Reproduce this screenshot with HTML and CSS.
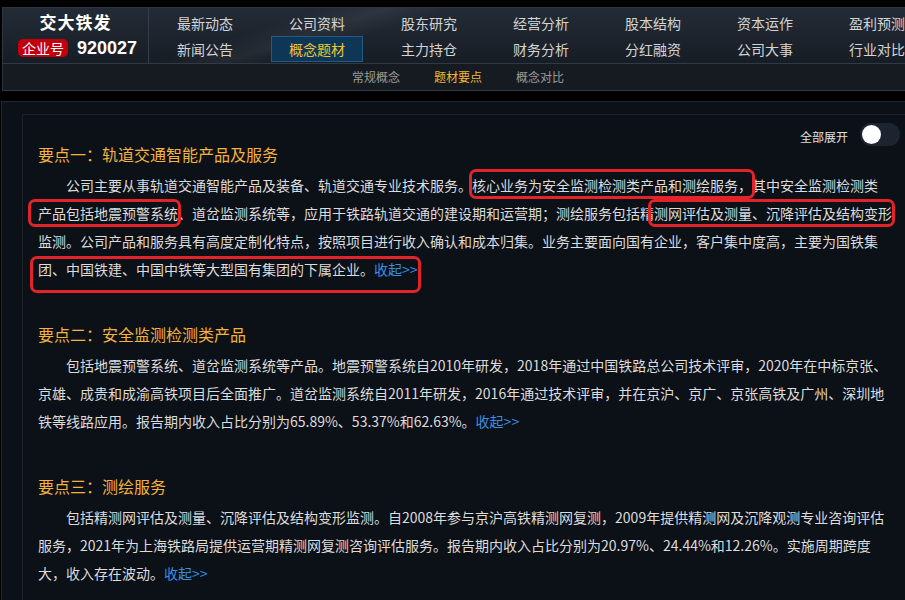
FILE: index.html
```html
<!DOCTYPE html>
<html>
<head>
  <title>交大铁发 - 题材要点</title>
  <link rel="stylesheet" href="styles.css">
</head>
<body>
  <div class="header">
    <div class="brand">
      <div class="brand-name">交大铁发</div>
      <div class="brand-code"><span class="badge">企业号</span><span class="code">920027</span></div>
    </div>
    <ul class="nav">
      <li>最新动态</li>
      <li>公司资料</li>
      <li>股东研究</li>
      <li>经营分析</li>
      <li>股本结构</li>
      <li>资本运作</li>
      <li>盈利预测</li>
      <li>新闻公告</li>
      <li class="active">概念题材</li>
      <li>主力持仓</li>
      <li>财务分析</li>
      <li>分红融资</li>
      <li>公司大事</li>
      <li>行业对比</li>
    </ul>
  </div>

  <div class="subnav">
    <a>常规概念</a>
    <a class="active">题材要点</a>
    <a>概念对比</a>
  </div>

  <div class="panel">
    <div class="box">
      <div class="toolbar">
        <span class="toolbar-label">全部展开</span>
        <span class="switch"></span>
      </div>

      <div class="point">
        <h3>要点一：轨道交通智能产品及服务</h3>
        <p>公司主要从事轨道交通智能产品及装备、轨道交通专业技术服务。<span class="mark m1">核心业务为安全监测检测类产品和测绘服务，</span>其中安全监测检测类<br><span class="mark m2">产品包括地震预警系统</span>、道岔监测系统等，应用于铁路轨道交通的建设期和运营期；测绘服务包括精<span class="mark m3">测网评估及测量、沉降评估及结构变形</span>监测。公司产品和服务具有高度定制化特点，按照项目进行收入确认和成本归集。业务主要面向国有企业，客户集中度高，主要为国铁集<span class="mark m4">团、中国铁建、中国中铁等大型国有集团的下属企业。<a class="fold">收起&gt;&gt;</a></span></p>
      </div>

      <div class="point">
        <h3>要点二：安全监测检测类产品</h3>
        <p>包括地震预警系统、道岔监测系统等产品。地震预警系统自2010年研发，2018年通过中国铁路总公司技术评审，2020年在中标京张、京雄、成贵和成渝高铁项目后全面推广。道岔监测系统自2011年研发，2016年通过技术评审，并在京沪、京广、京张高铁及广州、深圳地铁等线路应用。报告期内收入占比分别为65.89%、53.37%和62.63%。<a class="fold">收起&gt;&gt;</a></p>
      </div>

      <div class="point">
        <h3>要点三：测绘服务</h3>
        <p>包括精测网评估及测量、沉降评估及结构变形监测。自2008年参与京沪高铁精测网复测，2009年提供精测网及沉降观测专业咨询评估服务，2021年为上海铁路局提供运营期精测网复测咨询评估服务。报告期内收入占比分别为20.97%、24.44%和12.26%。实施周期跨度大，收入存在波动。<a class="fold">收起&gt;&gt;</a></p>
      </div>
    </div>
  </div>
</body>
</html>
```

FILE: styles.css
```css
html, body {
  overflow: hidden;
}

body {
  margin: 0;
  background: #000;
  font-family: "Noto Sans CJK SC", "Liberation Sans", sans-serif;
  color: #dcdcdc;
}

/* top header */
.header {
  display: flex;
  height: 55px;
  margin: 7px 0 0 2px;
  border-top: 1px solid #2c3642;
  border-bottom: 1px solid #2f3a46;
  border-left: 1px solid #2c3642;
  background:
    linear-gradient(162deg, transparent 30%, rgba(255, 255, 255, 0.05) 36%, transparent 42%),
    linear-gradient(#232b36, #171d25);
  overflow: hidden;
}

.brand {
  flex: none;
  width: 145px;
  border-right: 1px solid #343e4a;
}

.brand-name {
  padding-top: 1px;
  line-height: 26px;
  text-align: center;
  font-size: 17px;
  font-weight: bold;
  letter-spacing: 1px;
  color: #fff;
}

.brand-code {
  display: flex;
  align-items: center;
  justify-content: center;
  gap: 9px;
  height: 26px;
  padding-left: 4px;
}

.badge {
  width: 50px;
  height: 18px;
  line-height: 18px;
  border-radius: 5px;
  background: #c2000b;
  text-align: center;
  font-size: 14px;
  color: #fff;
}

.code {
  font-family: "Liberation Sans", sans-serif;
  font-size: 18px;
  font-weight: bold;
  color: #fff;
}

.nav {
  display: grid;
  grid-template-columns: repeat(7, 112px);
  grid-auto-rows: 26px;
  margin: 0;
  padding: 2px 0 0;
  list-style: none;
}

.nav li {
  line-height: 26px;
  text-align: center;
  font-size: 14px;
  color: #d4d4d4;
  cursor: pointer;
}

.nav li.active {
  margin: 0 10px;
  line-height: 24px;
  border: 1px solid #245a82;
  background: #0e3757;
  color: #f1c232;
}

/* second level menu */
.subnav {
  display: flex;
  justify-content: center;
  gap: 34px;
  height: 26px;
  margin-left: 2px;
  padding-left: 8px;
  border-left: 1px solid #2c3642;
  border-bottom: 1px solid #2f3a46;
  background: #161b22;
}

.subnav a {
  line-height: 26px;
  font-size: 12px;
  color: #9a9a9a;
  cursor: pointer;
}

.subnav a.active {
  color: #f5b52e;
}

/* content */
.panel {
  height: 600px;
  margin: 10px 0 0 1px;
  padding: 12px 0 0 20px;
  border-top: 1px solid #202833;
  border-left: 1px solid #202833;
  background: #0c1017;
}

.box {
  height: 100%;
  padding-left: 15px;
  border-top: 1px solid #1b222d;
  border-left: 1px solid #1b222d;
}

.toolbar {
  display: flex;
  align-items: center;
  justify-content: flex-end;
  height: 23px;
  margin-top: 8px;
  padding-right: 5px;
}

.toolbar-label {
  margin: 4px 12px 0 0;
  font-size: 12px;
  color: #e0e0e0;
}

.switch {
  position: relative;
  width: 40px;
  height: 23px;
  border-radius: 12px;
  background: #1c2430;
}

.switch::after {
  content: "";
  position: absolute;
  left: 2px;
  top: 2px;
  width: 19px;
  height: 19px;
  border-radius: 50%;
  background: #fff;
}

.point {
  width: 855px;
  margin-bottom: 37px;
}

.point h3 {
  margin: 0 0 3px;
  line-height: 28px;
  font-size: 16px;
  font-weight: normal;
  color: #f3b33d;
}

.toolbar + .point h3 {
  margin-top: -6px;
}

.point p {
  margin: 0;
  line-height: 28px;
  font-size: 14px;
  text-indent: 2em;
}

.fold {
  color: #3a8fe2;
  cursor: pointer;
}

/* red highlight frames */
.mark {
  padding: 3px 0 1px;
  border-radius: 4px;
  outline: 3px solid #e3232a;
}

.m2 {
  margin-left: -7px;
  padding: 1px 0 1px 7px;
}

.m3 {
  margin-left: -3px;
  padding: 1px 0 1px 3px;
}

.m4 {
  margin-left: -5px;
  padding: 0 0 11px 5px;
}
```
